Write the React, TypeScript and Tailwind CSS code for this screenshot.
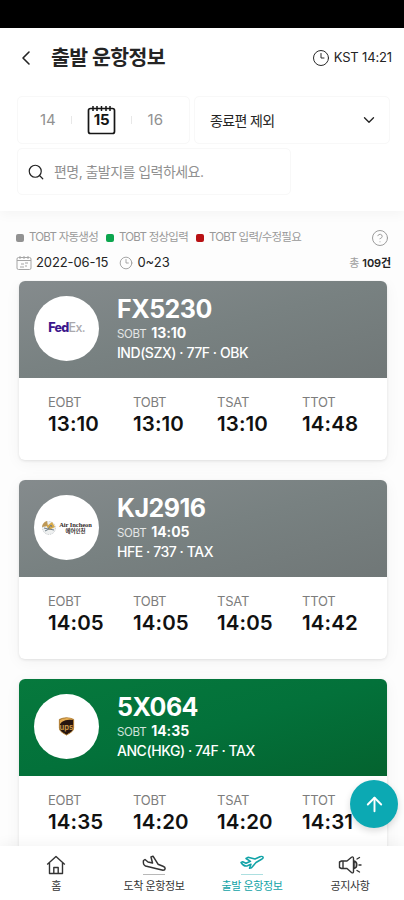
import { ArrowUp, ChevronDown, ChevronLeft, CircleHelp, Clock3, Search } from "lucide-react";
import type { ReactNode } from "react";

type Flight = {
  code: string;
  sobt: string;
  route: string;
  logo: ReactNode;
  header: string;
  times: [string, string][];
};

function FedExLogo() {
  return (
    <span className="text-[12.5px] font-extrabold tracking-[-0.7px] text-[#3d168c]">
      Fed<span className="font-medium text-[#aaa8ad]">Ex.</span>
    </span>
  );
}

function AirIncheonLogo() {
  return (
    <div className="flex items-center gap-[2px]">
      <svg width="16" height="16" viewBox="0 0 16 16" fill="none">
        <circle cx="8" cy="8" r="6.5" fill="#eef0f0" stroke="#c3c7ca" strokeWidth=".8" strokeDasharray="1.5 1" />
        <path d="M1 7a7 7 0 0 1 5-6l1 5-6 1Z" fill="#bd9856" />
        <path d="m6 6 5-4 3 5-6 3-2-3Z" fill="#d8aa49" />
        <path d="m3 8 4 1 3-4 1 2M4 11l4-2 5 1" stroke="#71808b" />
      </svg>
      <div className="flex flex-col items-center text-[#332b2b]">
        <span className="font-['Liberation_Serif',serif] text-[6.5px] leading-[6px] font-bold tracking-[-0.05px] whitespace-nowrap">Air Incheon</span>
        <span className="text-[5.5px] leading-[6px] font-bold">에어인천</span>
      </div>
    </div>
  );
}

function UpsLogo() {
  return (
    <svg width="17" height="19" viewBox="0 0 17 20">
      <path d="M1 2.5Q8.5-.8 16 2.5v8.8c0 4-4 5.5-7.5 7.7C5 16.8 1 15.3 1 11.3Z" fill="#27150f" stroke="#b98330" />
      <path d="M1.5 8C4 3 10 3 15.5 3v-.4Q8.5-.4 1.5 2.8Z" fill="#e6ad51" />
      <text x="8.3" y="13.5" textAnchor="middle" fill="#c99547" fontFamily="Inter, sans-serif" fontSize="8" fontWeight="700">ups</text>
    </svg>
  );
}

const flights: Flight[] = [
  {
    code: "FX5230",
    sobt: "13:10",
    route: "IND(SZX) · 77F · OBK",
    logo: <FedExLogo />,
    header: "from-[#858b8d] via-[#788181] to-[#707777]",
    times: [["EOBT", "13:10"], ["TOBT", "13:10"], ["TSAT", "13:10"], ["TTOT", "14:48"]],
  },
  {
    code: "KJ2916",
    sobt: "14:05",
    route: "HFE · 737 · TAX",
    logo: <AirIncheonLogo />,
    header: "from-[#858b8d] via-[#788181] to-[#707777]",
    times: [["EOBT", "14:05"], ["TOBT", "14:05"], ["TSAT", "14:05"], ["TTOT", "14:42"]],
  },
  {
    code: "5X064",
    sobt: "14:35",
    route: "ANC(HKG) · 74F · TAX",
    logo: <UpsLogo />,
    header: "from-[#06793d] via-[#03713a] to-[#04632f]",
    times: [["EOBT", "14:35"], ["TOBT", "14:20"], ["TSAT", "14:20"], ["TTOT", "14:31"]],
  },
];

function FlightCard({ flight }: { flight: Flight }) {
  return (
    <article className="h-[179px] w-[368px] shrink-0 overflow-hidden rounded-[6px] bg-white shadow-[0_1px_3px_#00000018,0_3px_16px_#0000000c]">
      <div className={`flex h-[97px] bg-linear-to-br pl-[15px] ${flight.header}`}>
        <div className="mt-[15px] flex size-[65px] shrink-0 items-center justify-center rounded-full bg-white">
          {flight.logo}
        </div>
        <div className="ml-[18px] pt-[14px] text-white">
          <h2 className="text-[25px] leading-[29px] font-bold tracking-[-0.5px]">{flight.code}</h2>
          <p className="mt-[1px] text-[11.5px] leading-[16px] tracking-[-0.3px] text-white/80">
            SOBT <span className="ml-[2px] text-[14px] font-bold tracking-[-0.05px] text-white">{flight.sobt}</span>
          </p>
          <p className="mt-[1px] text-[14px] leading-[20px] font-medium tracking-[-0.45px]">{flight.route}</p>
        </div>
      </div>
      <div className="grid grid-cols-[85px_84px_85px_85px] pt-[15px] pl-[29px]">
        {flight.times.map(([label, time]) => (
          <div key={label}>
            <p className="text-[13px] leading-[18px] tracking-[-0.2px] text-[#7d7d7d]">{label}</p>
            <p className="text-[20.5px] leading-[25px] font-semibold tracking-[0.1px] text-[#111]">{time}</p>
          </div>
        ))}
      </div>
    </article>
  );
}

function Legend({ color, children }: { color: string; children: ReactNode }) {
  return (
    <span className="flex items-center gap-[5px]">
      <i className={`size-[8px] rounded-[2px] ${color}`} />
      {children}
    </span>
  );
}

function DateIcon() {
  return (
    <svg width="16" height="16" viewBox="0 0 16 16" fill="none" stroke="#a5a5a5">
      <rect x="1" y="2.5" width="14" height="12" rx="1.5" />
      <path d="M1 5.5h14M4 1v3M8 1v3M12 1v3M5 9h3M9 8h3M4 12h4M9 11h2" />
    </svg>
  );
}

function HomeIcon() {
  return (
    <svg width="20" height="20" viewBox="0 0 20 20" fill="none" stroke="currentColor" strokeWidth="1.4" strokeLinejoin="round">
      <path d="M1.2 9.5 10 1.5l8.8 8M3.5 8v10.500h13V8M7.800 18.500v-6h4.400v6" />
    </svg>
  );
}

function PlaneIcon({ landing = false }: { landing?: boolean }) {
  return (
    <svg width="26" height="22" viewBox="0 0 26 22" fill="none" stroke="currentColor" strokeWidth="1.5" strokeLinejoin="round">
      {landing ? (
        <path d="m2.500 6.500 1.500-1 3 2.500 4.500 1-1.500-6 2-.8 5 8 5 2c3.200 1.200 2.500 4 0 4L4.500 12C2.500 11 2 9 2.500 6.500Z" />
      ) : (
        <path d="m2 8.500 1.700-.7 3.300 1.500 4.500-2L7 4.500 9 3.300l7 1.700 5-2.300c3-1 4.200.8 2 2.300l-6 3.500-4.500 5.200-2 .6 1.500-4-3.500 1.500c-2.500 1-4.500-.3-6.500-3.300Z" />
      )}
      <path d="M2 20.500h22" strokeWidth="1" opacity=".35" />
    </svg>
  );
}

function MegaphoneIcon() {
  return (
    <svg width="24" height="20" viewBox="0 0 24 20" fill="none" stroke="currentColor" strokeWidth="1.4" strokeLinecap="round" strokeLinejoin="round">
      <path d="M15.500 3.500v13c0 1.500-1 1.700-2 1L9 13.500H3.500l-2-1V7l2-1H9l4.500-3.700c1-.8 2-.4 2 1.200Z" />
      <path d="M5 6.500v6.500M16 6c3.800 1 3.800 6.500 0 7.500V6Z" fill="#bdbdbd" />
      <path d="m19 4 2.500-1.500M21 10h2M19 15.500l2.500 1.500" />
    </svg>
  );
}

const tabs = [
  { name: "홈", icon: <HomeIcon /> },
  { name: "도착 운항정보", icon: <PlaneIcon landing /> },
  { name: "출발 운항정보", icon: <PlaneIcon />, active: true },
  { name: "공지사항", icon: <MegaphoneIcon /> },
];

export default function App() {
  return (
    <div className="relative flex h-[900px] w-[404px] flex-col overflow-hidden bg-[#fdfdfd] font-[Inter,'Noto_Sans_CJK_KR',sans-serif] text-[#242424]">
      <div className="h-[28px] shrink-0 bg-black" />
      <section className="h-[183px] shrink-0 bg-white shadow-[0_3px_12px_#0000000a]">
        <header className="flex h-[60px] items-center pr-[12px] pl-[14px]">
          <ChevronLeft size={24} strokeWidth={1.6} />
          <h1 className="ml-[13px] text-[20.5px] font-bold tracking-[-0.55px] whitespace-nowrap">출발 운항정보</h1>
          <div className="ml-auto flex items-center gap-[4px] text-[13px] tracking-[-0.15px]">
            <Clock3 size={18} strokeWidth={1.3} />
            KST 14:21
          </div>
        </header>
        <div className="mt-[8px] flex gap-[4px] pl-[17px]">
          <div className="flex h-[48px] w-[173px] items-center justify-between rounded-[5px] border border-[#f8f8f8] pr-[26px] pl-[22px] text-[15px] text-[#919191]">
            <span>14</span>
            <span className="h-[8px] w-px bg-[#e8e8e8]" />
            <div className="relative flex h-[30px] w-[29px] items-center justify-center text-[#161616]">
              <svg className="absolute inset-0" width="29" height="30" viewBox="0 0 29 30" fill="none" stroke="currentColor">
                <rect x="1.5" y="3.5" width="26" height="25" rx="2" strokeWidth="1.7" />
                <path d="M6 1v5M10 1v5M14.5 1v5M19 1v5M23 1v5" strokeWidth="1.5" />
              </svg>
              <span className="relative text-[15px] font-bold">15</span>
            </div>
            <span className="h-[8px] w-px bg-[#e8e8e8]" />
            <span>16</span>
          </div>
          <div className="flex h-[48px] w-[196px] items-center justify-between rounded-[5px] border border-[#f8f8f8] pr-[11px] pl-[15px] text-[14px] tracking-[-0.65px]">
            <span>종료편 제외</span>
            <ChevronDown size={18} strokeWidth={1.8} />
          </div>
        </div>
        <div className="mt-[4px] ml-[17px] flex h-[47px] w-[274px] items-center gap-[9px] rounded-[5px] border border-[#f8f8f8] pl-[9px] text-[14px] tracking-[-0.55px] text-[#909090]">
          <Search size={18} strokeWidth={1.6} className="text-[#222]" />
          <span>편명, 출발지를 입력하세요.</span>
        </div>
      </section>

      <div className="flex h-[69px] shrink-0 flex-col pt-[17px] pr-[13px] pl-[16px]">
        <div className="flex h-[20px] items-center gap-[8px] text-[11.5px] tracking-[-0.75px] whitespace-nowrap text-[#999]">
          <Legend color="bg-[#929292]">TOBT 자동생성</Legend>
          <Legend color="bg-[#0ca64e]">TOBT 정상입력</Legend>
          <Legend color="bg-[#b81114]">TOBT 입력/수정필요</Legend>
          <CircleHelp size={18} strokeWidth={1.3} className="mr-[2px] ml-auto" />
        </div>
        <div className="mt-[5px] flex h-[20px] items-center text-[13px]">
          <DateIcon />
          <span className="ml-[4px] tracking-[-0.1px]">2022-06-15</span>
          <Clock3 size={14} strokeWidth={1.5} className="ml-[11px] text-[#999]" />
          <span className="ml-[4px]">0~23</span>
          <span className="ml-auto text-[11px] tracking-[-0.1px] text-[#a0a0a0]">총 <b className="font-semibold text-[#222]">109건</b></span>
        </div>
      </div>

      <main className="flex min-h-0 flex-1 flex-col gap-[20px] overflow-hidden pt-px pl-[19px]">
        {flights.map((flight) => <FlightCard key={flight.code} flight={flight} />)}
      </main>

      <nav className="z-10 grid h-[54px] shrink-0 grid-cols-4 bg-white pr-[5px] pl-[7px] shadow-[0_-3px_12px_#0000000b]">
        {tabs.map((tab) => (
          <div key={tab.name} className={`flex flex-col items-center pt-[7px] ${tab.active ? "text-[#11a3a7]" : "text-[#333]"}`}>
            <div className="flex h-[23px] items-center">{tab.icon}</div>
            <span className="mt-[2px] text-[11px] leading-[16px] tracking-[-0.4px]">{tab.name}</span>
          </div>
        ))}
      </nav>
      <button aria-label="맨 위로" className="absolute right-[6px] bottom-[72px] flex size-[48px] items-center justify-center rounded-full bg-[#0ca9b3] text-white shadow-[0_3px_7px_#00000024]">
        <ArrowUp size={23} strokeWidth={2} />
      </button>
    </div>
  );
}
